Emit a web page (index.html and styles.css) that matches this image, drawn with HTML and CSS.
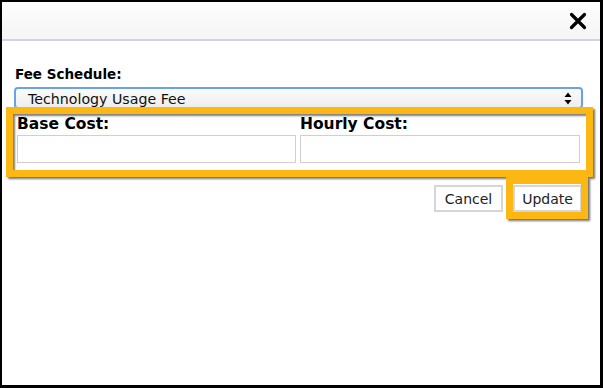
FILE: index.html
```html
<!DOCTYPE html>
<html>
<head>
<meta charset="utf-8">
<link rel="stylesheet" href="styles.css">
</head>
<body>
<div class="dialog">
  <div class="header">
    <button class="close" aria-label="Close">
      <svg width="18" height="18" viewBox="0 0 18 18"><path d="M2.5 2.5 L15.5 15.5 M15.5 2.5 L2.5 15.5" stroke="#000" stroke-width="3.2" stroke-linecap="round" fill="none"/></svg>
    </button>
  </div>
  <div class="content">
    <div class="label-sm">Fee Schedule:</div>
    <div class="select">
      <span class="select-text">Technology Usage Fee</span>
      <svg class="arrows" width="8" height="13" viewBox="0 0 8 13"><path d="M4 0.5 L7.5 5 L0.5 5 Z M0.5 8 L7.5 8 L4 12.5 Z" fill="#000"/></svg>
    </div>
    <div class="fields">
      <div class="field">
        <div class="label">Base Cost:</div>
        <div class="input"></div>
      </div>
      <div class="field">
        <div class="label">Hourly Cost:</div>
        <div class="input"></div>
      </div>
    </div>
    <div class="buttons">
      <button class="btn">Cancel</button>
      <button class="btn">Update</button>
    </div>
  </div>
  <div class="hl hl-fields"></div>
  <div class="hl hl-update"></div>
</div>
</body>
</html>
```
FILE: styles.css
```css
html, body {
  margin: 0;
  padding: 0;
  background: #fff;
}
.dialog {
  position: relative;
  width: 603px;
  height: 388px;
  box-sizing: border-box;
  border-style: solid;
  border-color: #000;
  border-width: 2px 3px 3px 2px;
  background: #fff;
  font-family: "DejaVu Sans", Verdana, sans-serif;
  color: #000;
  overflow: hidden;
}
.header {
  height: 37px;
  background: linear-gradient(#fdfdfd, #f5f5f5);
  border-bottom: 2px solid #d1d3e6;
  display: flex;
  justify-content: flex-end;
  align-items: center;
  padding-right: 13px;
}
.close {
  border: 0;
  background: none;
  padding: 0;
  width: 18px;
  height: 18px;
  margin-top: 0;
  display: block;
}
.close svg { display: block; }
.content {
  padding: 25px 17px 0 13px;
}
.label-sm {
  font-size: 13.5px;
  font-weight: bold;
  line-height: 17px;
  height: 17px;
}
.select {
  margin: 4px 0 0 -1px;
  width: 569px;
  height: 22px;
  box-sizing: border-box;
  border: 2px solid #6aa3e3;
  border-radius: 4px;
  background: linear-gradient(#fbfbfb, #eeeeee);
  display: flex;
  align-items: center;
  justify-content: space-between;
  padding: 0 9px 0 12px;
}
.select-text {
  font-size: 14.2px;
  line-height: 18px;
  color: #111;
  margin-top: 1px;
}
.arrows { display: block; }
.fields {
  display: flex;
  gap: 4px;
  margin: 6px 0 0 2px;
}
.field {
  display: flex;
  flex-direction: column;
}
.field:first-child { width: 279px; }
.field:last-child { width: 280px; }
.label {
  font-size: 15.5px;
  font-weight: bold;
  line-height: 19px;
  height: 20px;
}
.input {
  height: 28px;
  box-sizing: border-box;
  border: 1px solid #cfcfcf;
  background: #fff;
}
.buttons {
  display: flex;
  justify-content: flex-end;
  gap: 10px;
  margin: 22px 1px 0 0;
}
.btn {
  width: 69px;
  height: 27px;
  box-sizing: border-box;
  border: 2px solid #d6d6d6;
  background: #fff;
  font-family: "DejaVu Sans", Verdana, sans-serif;
  font-size: 14px;
  color: #222;
  padding: 0;
}
.hl {
  position: absolute;
  box-sizing: border-box;
  border: 7px solid #fcb712;
  box-shadow: 2px 2px 2px rgba(0,0,0,0.55), inset 2px 2px 2px rgba(0,0,0,0.5);
  pointer-events: none;
}
.hl-fields {
  left: 4px;
  top: 105px;
  width: 587px;
  height: 70px;
}
.hl-update {
  left: 504px;
  top: 175px;
  width: 82px;
  height: 42px;
  box-shadow: 2px 2px 2px rgba(0,0,0,0.55);
}
```
